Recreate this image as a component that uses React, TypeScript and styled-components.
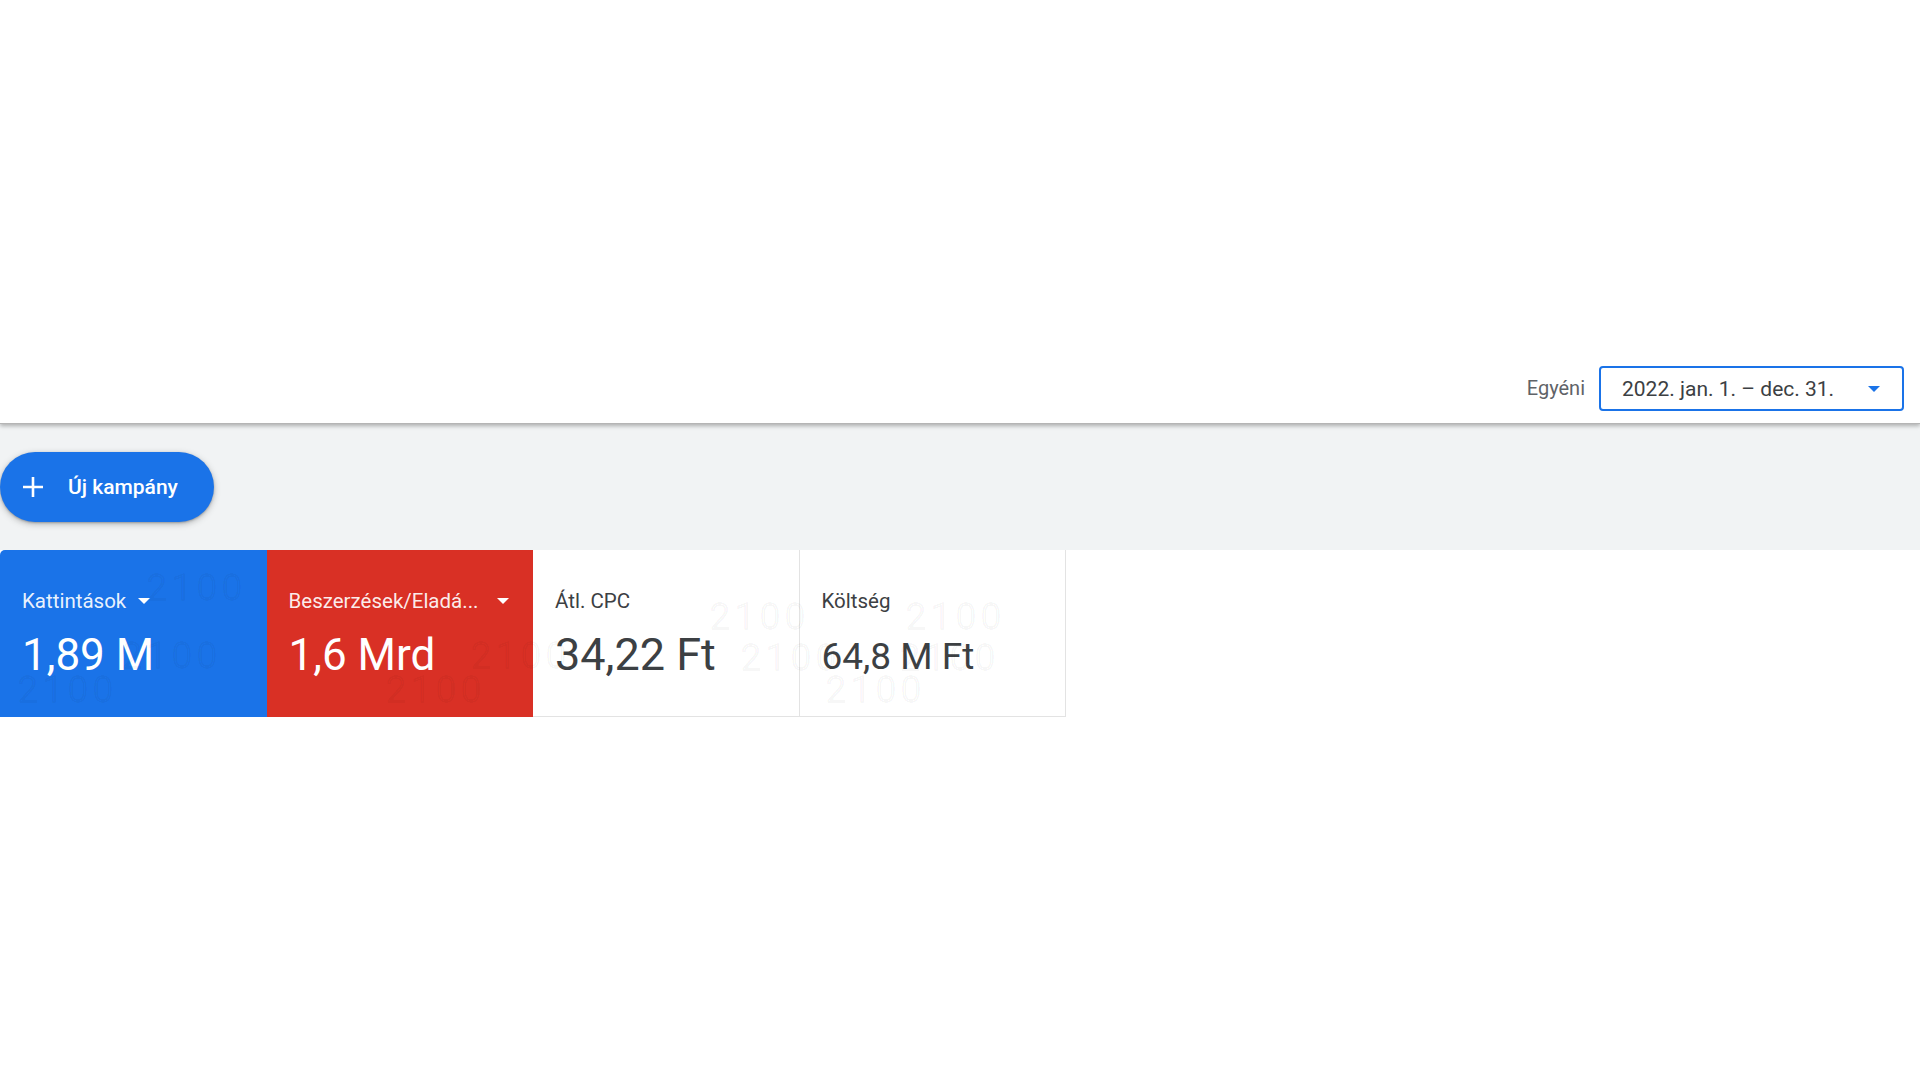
import styled, { createGlobalStyle } from "styled-components";

const GlobalStyle = createGlobalStyle`
  body {
    margin: 0;
    background: #ffffff;
    font-family: Roboto, "Noto Sans", Arial, sans-serif;
    color: #3c4043;
  }
`;

const Page = styled.div`
  width: 1920px;
  min-height: 1080px;
  background: #ffffff;
`;

const Header = styled.header`
  height: 424px;
  box-sizing: border-box;
  display: flex;
  justify-content: flex-end;
  align-items: flex-end;
  gap: 14px;
  padding: 0 16px 12px 0;
  border-bottom: 1px solid #b5b5b5;
  box-shadow: 0 2px 4px rgba(0, 0, 0, 0.28);
  position: relative;
  z-index: 1;
`;

const RangeLabel = styled.span`
  font-size: 20px;
  color: #5f6368;
  line-height: 45px;
`;

const DateSelect = styled.div`
  width: 305px;
  height: 45px;
  box-sizing: border-box;
  border: 2px solid #1a73e8;
  border-radius: 4px;
  display: flex;
  align-items: center;
  padding: 0 22px 0 21px;
  cursor: pointer;
`;

const DateText = styled.span`
  font-size: 21px;
  color: #3c4043;
  white-space: nowrap;
`;

const Caret = styled.span<{ $color: string; $push?: boolean }>`
  width: 0;
  height: 0;
  border-left: 6.5px solid transparent;
  border-right: 6.5px solid transparent;
  border-top: 6.5px solid ${(p) => p.$color};
  margin-left: ${(p) => (p.$push ? "auto" : "12px")};
  flex-shrink: 0;
`;

const Toolbar = styled.section`
  background: #f1f3f4;
  padding: 28px 0;
`;

const NewButton = styled.button`
  height: 70px;
  width: 214px;
  border: none;
  border-radius: 35px;
  background: #1a73e8;
  color: #ffffff;
  display: flex;
  align-items: center;
  gap: 23px;
  padding: 0 0 0 21px;
  font-family: Roboto, "Noto Sans", Arial, sans-serif;
  font-size: 21px;
  font-weight: 500;
  box-shadow: 0 2px 6px rgba(60, 64, 67, 0.35), 0 1px 2px rgba(60, 64, 67, 0.3);
  cursor: pointer;
`;

const CardRow = styled.section`
  position: relative;
  display: grid;
  grid-template-columns: repeat(4, 266.5px);
  width: 1066px;
  overflow: hidden;
`;

const tones = {
  blue: { bg: "#1a73e8", fg: "#ffffff", label: "rgba(255,255,255,0.92)", border: "#1a73e8" },
  red: { bg: "#d93025", fg: "#ffffff", label: "rgba(255,255,255,0.92)", border: "#d93025" },
  plain: { bg: "#ffffff", fg: "#3c4043", label: "#3c4043", border: "#e3e3e3" },
};

type Tone = keyof typeof tones;

const MetricCard = styled.div<{ $tone: Tone; $first?: boolean }>`
  height: 167px;
  box-sizing: border-box;
  padding: 40px 0 0 22px;
  background: ${(p) => tones[p.$tone].bg};
  border-right: 1px solid ${(p) => tones[p.$tone].border};
  border-bottom: 1px solid ${(p) => tones[p.$tone].border};
  border-top-left-radius: ${(p) => (p.$first ? "5px" : "0")};
  color: ${(p) => tones[p.$tone].fg};
`;

const CardLabel = styled.div<{ $tone: Tone; $wide?: boolean }>`
  display: flex;
  align-items: center;
  height: 22px;
  font-size: 20.5px;
  color: ${(p) => tones[p.$tone].label};
  width: ${(p) => (p.$wide ? "220px" : "auto")};
  white-space: nowrap;
`;

const CardValue = styled.div<{ $size: number }>`
  margin-top: 17px;
  font-size: ${(p) => p.$size}px;
  line-height: 52px;
  white-space: nowrap;
  padding-top: ${(p) => (p.$size < 44 ? 2 : 0)}px;
`;

const Watermark = styled.span`
  position: absolute;
  font-size: 36px;
  font-weight: 300;
  letter-spacing: 5px;
  color: transparent;
  -webkit-text-stroke: 1.4px rgba(0, 0, 0, 0.05);
  pointer-events: none;
  user-select: none;
`;

const PlusIcon = () => (
  <svg width="24" height="24" viewBox="0 0 24 24" fill="none">
    <path d="M12 2v20M2 12h20" stroke="#ffffff" strokeWidth="2.6" />
  </svg>
);

const metrics: { label: string; value: string; tone: Tone; size: number; caret?: boolean; wide?: boolean }[] = [
  { label: "Kattintások", value: "1,89 M", tone: "blue", size: 44, caret: true },
  { label: "Beszerzések/Eladá...", value: "1,6 Mrd", tone: "red", size: 44, caret: true, wide: true },
  { label: "Átl. CPC", value: "34,22 Ft", tone: "plain", size: 45 },
  { label: "Költség", value: "64,8 M Ft", tone: "plain", size: 37 },
];

const marks = [
  [147, 17], [122, 85], [18, 119], [471, 85], [386, 119],
  [710, 46], [741, 87], [906, 46], [900, 87], [826, 119],
];

export default function App() {
  return (
    <Page>
      <GlobalStyle />
      <Header>
        <RangeLabel>Egyéni</RangeLabel>
        <DateSelect>
          <DateText>2022. jan. 1. – dec. 31.</DateText>
          <Caret $color="#1a73e8" $push />
        </DateSelect>
      </Header>
      <Toolbar>
        <NewButton>
          <PlusIcon />
          <span>Új kampány</span>
        </NewButton>
      </Toolbar>
      <CardRow>
        {metrics.map((m, i) => (
          <MetricCard key={m.label} $tone={m.tone} $first={i === 0}>
            <CardLabel $tone={m.tone} $wide={m.wide}>
              {m.label}
              {m.caret ? <Caret $color="#ffffff" $push={m.wide} /> : null}
            </CardLabel>
            <CardValue $size={m.size}>{m.value}</CardValue>
          </MetricCard>
        ))}
        {marks.map(([x, y], i) => (
          <Watermark key={i} style={{ left: x, top: y }}>
            2100
          </Watermark>
        ))}
      </CardRow>
    </Page>
  );
}
